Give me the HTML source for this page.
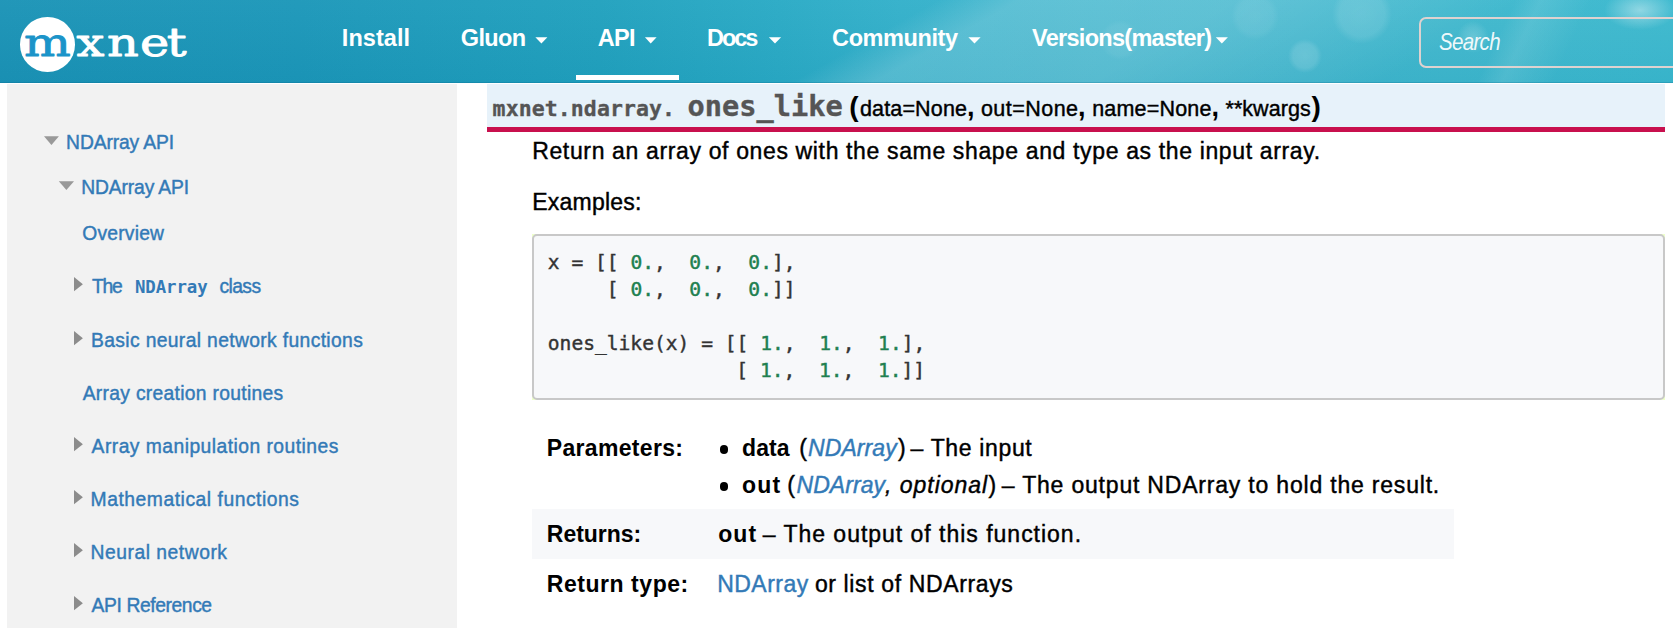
<!DOCTYPE html>
<html lang="en">
<head>
<meta charset="utf-8">
<title>NDArray API - mxnet documentation</title>
<style>
html,body{margin:0;padding:0;background:#fff;}
body{width:1673px;height:628px;overflow:hidden;position:relative;font-family:'Liberation Sans',Arial,sans-serif;}
a{text-decoration:none;}
p,em,code{margin:0;padding:0;}
.layer{position:absolute;left:0;top:0;width:1673px;height:628px;}
header.navbar{position:absolute;left:0;top:0;width:1673px;height:83px;overflow:hidden;
 background:
  radial-gradient(ellipse 36px 20px at 1640px 10px, rgba(255,255,255,.42), rgba(255,255,255,0) 100%),
  radial-gradient(circle 16px at 1473px 37px, rgba(255,255,255,.20) 0, rgba(255,255,255,.10) 60%, rgba(255,255,255,0) 100%),
  radial-gradient(circle 30px at 1362px 14px, rgba(255,255,255,.13) 0, rgba(255,255,255,.10) 75%, rgba(255,255,255,0) 100%),
  radial-gradient(circle 17px at 1305px 56px, rgba(255,255,255,.16) 0, rgba(255,255,255,.12) 70%, rgba(255,255,255,0) 100%),
  radial-gradient(circle 24px at 1255px 16px, rgba(255,255,255,.08) 0, rgba(255,255,255,.06) 75%, rgba(255,255,255,0) 100%),
  radial-gradient(circle 20px at 1120px 40px, rgba(255,255,255,.07) 0, rgba(255,255,255,.05) 75%, rgba(255,255,255,0) 100%),
  linear-gradient(115deg, rgba(255,255,255,0) 88.5%, rgba(255,255,255,.10) 90%, rgba(255,255,255,0) 93%),
  linear-gradient(150.7deg, rgba(255,255,255,0) 51.5%, rgba(255,255,255,.17) 56%, rgba(255,255,255,.15) 68%, rgba(255,255,255,0) 84%),
  linear-gradient(180deg, rgba(255,255,255,.035), rgba(0,40,80,.035)),
  linear-gradient(90deg,#1a93b6 0px,#1b97b9 300px,#20a1be 600px,#29aac5 780px,#32b0ca 900px,#3cb4cc 1100px,#3fb6cd 1300px,#3db7cd 1450px,#39b8ce 1673px);}
header.navbar:after{content:"";position:absolute;left:0;right:0;bottom:0;height:1px;background:rgba(0,90,130,.22);}
.logo-circle{position:absolute;left:20.2px;top:17.4px;width:54.6px;height:54.6px;border-radius:50%;background:#fff;}
.underline{position:absolute;left:576.4px;top:75px;width:102.6px;height:5px;background:#fff;}
.searchbox{position:absolute;left:1419.3px;top:17.2px;width:300px;height:50.6px;box-sizing:border-box;border:2px solid #ded2d0;border-radius:7px;background:rgba(255,255,255,.02);}
aside.sidebar{position:absolute;left:7px;top:84px;width:450px;height:544px;background:#f2f2f2;}
.sigbg{position:absolute;left:487px;top:84px;width:1178px;height:42.8px;background:#e7f2fa;border-bottom:5.2px solid #c8104e;}
.highlight{position:absolute;left:532px;top:234px;width:1133px;height:166px;background:#eeffcc;}
.codebox{position:absolute;left:0;top:0;width:1133px;height:166px;box-sizing:border-box;border:2px solid #c8c8c8;border-radius:5px;background:#f7f8fa;}
.rowbg{position:absolute;left:532px;top:509px;width:921.5px;height:50px;background:#f7f8fa;}
.bullet{position:absolute;width:8.6px;height:8.6px;border-radius:50%;background:#000;left:719.6px;}
</style>
</head>
<body>
<header class="navbar">
 <div class="logo-circle"></div>
 <svg class="layer" width="1673" height="83" viewBox="0 0 1673 83" style="height:83px">
  <text transform="scale(1.22,0.98)" x="19.76 62.72 87.77 114.68 136.75" y="56.73" font-family="'DejaVu Serif','Liberation Serif',serif" font-size="40.5" stroke-width="0.9" stroke-linejoin="round"><tspan fill="#1b94c9" stroke="#1b94c9">m</tspan><tspan fill="#fff" stroke="#fff">xnet</tspan></text>
  <polygon points="535.4,37.3 547.4,37.3 541.4,43.5" fill="#fff"/><polygon points="644.9,37.3 656.6,37.3 650.75,43.5" fill="#fff"/><polygon points="768.9,37.3 781.1,37.3 775.0,43.5" fill="#fff"/><polygon points="968.4,37.3 980.6,37.3 974.5,43.5" fill="#fff"/><polygon points="1215.8000000000002,37.3 1227.8999999999999,37.3 1221.85,43.5" fill="#fff"/>
 </svg>
 <nav>
<span class="nav" style="position:absolute;left:341.80px;top:27.00px;white-space:pre;line-height:1;font-family:'Liberation Sans', Arial, sans-serif;font-size:23.5px;font-weight:bold;font-style:normal;color:#fff;letter-spacing:0.067px;">Install</span>
<span class="nav" style="position:absolute;left:460.80px;top:27.00px;white-space:pre;line-height:1;font-family:'Liberation Sans', Arial, sans-serif;font-size:23.5px;font-weight:bold;font-style:normal;color:#fff;letter-spacing:-0.625px;">Gluon</span>
<span class="nav" style="position:absolute;left:597.80px;top:27.00px;white-space:pre;line-height:1;font-family:'Liberation Sans', Arial, sans-serif;font-size:23.5px;font-weight:bold;font-style:normal;color:#fff;letter-spacing:-0.700px;">API</span>
<span class="nav" style="position:absolute;left:707.00px;top:27.00px;white-space:pre;line-height:1;font-family:'Liberation Sans', Arial, sans-serif;font-size:23.5px;font-weight:bold;font-style:normal;color:#fff;letter-spacing:-2.067px;">Docs</span>
<span class="nav" style="position:absolute;left:832.10px;top:27.00px;white-space:pre;line-height:1;font-family:'Liberation Sans', Arial, sans-serif;font-size:23.5px;font-weight:bold;font-style:normal;color:#fff;letter-spacing:-0.412px;">Community</span>
<span class="nav" style="position:absolute;left:1032.00px;top:27.00px;white-space:pre;line-height:1;font-family:'Liberation Sans', Arial, sans-serif;font-size:23.5px;font-weight:bold;font-style:normal;color:#fff;letter-spacing:-0.707px;">Versions(master)</span>
 </nav>
 <div class="underline"></div>
 <div class="searchbox"></div>
<span class="search" style="position:absolute;left:1439.10px;top:31.00px;white-space:pre;line-height:1;font-family:'Liberation Sans', Arial, sans-serif;font-size:23.6px;font-weight:normal;font-style:italic;color:rgba(255,255,255,0.93);letter-spacing:-0.800px;transform:scaleX(.87);transform-origin:0 0;">Search</span>
</header>
<aside class="sidebar"></aside>
<div class="layer sidebar-items">
 <svg class="layer" width="1673" height="628" viewBox="0 0 1673 628"><polygon points="44.0,136.2 58.9,136.2 51.45,144.9" fill="#999"/><polygon points="58.8,181.2 74,181.2 66.4,189.9" fill="#999"/><polygon points="74,277.1 82.9,284.15 74,291.2" fill="#8c8c8c"/><polygon points="74,331.1 82.9,338.15 74,345.2" fill="#8c8c8c"/><polygon points="74,437.1 82.9,444.15 74,451.2" fill="#8c8c8c"/><polygon points="74,490.1 82.9,497.15 74,504.2" fill="#8c8c8c"/><polygon points="74,543.1 82.9,550.1500000000001 74,557.2" fill="#8c8c8c"/><polygon points="74,596.1 82.9,603.1500000000001 74,610.2" fill="#8c8c8c"/></svg>
<a class="side" style="position:absolute;left:66.10px;top:133.00px;white-space:pre;line-height:1;font-family:'Liberation Sans', Arial, sans-serif;font-size:19.3px;font-weight:normal;font-style:normal;color:#337ab7;letter-spacing:-0.130px;-webkit-text-stroke:0.42px;">NDArray API</a>
<a class="side" style="position:absolute;left:81.20px;top:178.00px;white-space:pre;line-height:1;font-family:'Liberation Sans', Arial, sans-serif;font-size:19.3px;font-weight:normal;font-style:normal;color:#337ab7;letter-spacing:-0.130px;-webkit-text-stroke:0.42px;">NDArray API</a>
<a class="side" style="position:absolute;left:82.20px;top:224.00px;white-space:pre;line-height:1;font-family:'Liberation Sans', Arial, sans-serif;font-size:19.3px;font-weight:normal;font-style:normal;color:#337ab7;letter-spacing:0.214px;-webkit-text-stroke:0.42px;">Overview</a>
<a class="side" style="position:absolute;left:92.00px;top:277.00px;white-space:pre;line-height:1;font-family:'Liberation Sans', Arial, sans-serif;font-size:19.3px;font-weight:normal;font-style:normal;color:#337ab7;letter-spacing:-1.200px;-webkit-text-stroke:0.42px;">The</a>
<code class="side" style="position:absolute;left:134.90px;top:279.00px;white-space:pre;line-height:1;font-family:'DejaVu Sans Mono', 'Liberation Mono', monospace;font-size:17.4px;font-weight:bold;font-style:normal;color:#337ab7;letter-spacing:-0.083px;">NDArray</code>
<a class="side" style="position:absolute;left:219.50px;top:277.00px;white-space:pre;line-height:1;font-family:'Liberation Sans', Arial, sans-serif;font-size:19.3px;font-weight:normal;font-style:normal;color:#337ab7;letter-spacing:-0.600px;-webkit-text-stroke:0.42px;">class</a>
<a class="side" style="position:absolute;left:91.00px;top:331.00px;white-space:pre;line-height:1;font-family:'Liberation Sans', Arial, sans-serif;font-size:19.3px;font-weight:normal;font-style:normal;color:#337ab7;letter-spacing:0.355px;-webkit-text-stroke:0.42px;">Basic neural network functions</a>
<a class="side" style="position:absolute;left:82.70px;top:384.00px;white-space:pre;line-height:1;font-family:'Liberation Sans', Arial, sans-serif;font-size:19.3px;font-weight:normal;font-style:normal;color:#337ab7;letter-spacing:0.295px;-webkit-text-stroke:0.42px;">Array creation routines</a>
<a class="side" style="position:absolute;left:91.60px;top:437.00px;white-space:pre;line-height:1;font-family:'Liberation Sans', Arial, sans-serif;font-size:19.3px;font-weight:normal;font-style:normal;color:#337ab7;letter-spacing:0.462px;-webkit-text-stroke:0.42px;">Array manipulation routines</a>
<a class="side" style="position:absolute;left:90.60px;top:490.00px;white-space:pre;line-height:1;font-family:'Liberation Sans', Arial, sans-serif;font-size:19.3px;font-weight:normal;font-style:normal;color:#337ab7;letter-spacing:0.533px;-webkit-text-stroke:0.42px;">Mathematical functions</a>
<a class="side" style="position:absolute;left:90.60px;top:543.00px;white-space:pre;line-height:1;font-family:'Liberation Sans', Arial, sans-serif;font-size:19.3px;font-weight:normal;font-style:normal;color:#337ab7;letter-spacing:0.515px;-webkit-text-stroke:0.42px;">Neural network</a>
<a class="side" style="position:absolute;left:91.60px;top:596.00px;white-space:pre;line-height:1;font-family:'Liberation Sans', Arial, sans-serif;font-size:19.3px;font-weight:normal;font-style:normal;color:#337ab7;letter-spacing:-0.408px;-webkit-text-stroke:0.42px;">API Reference</a>
</div>
<main class="layer">
 <div class="sigbg"></div>
 <dl><dt>
<code class="sig" style="position:absolute;left:492.60px;top:98.00px;white-space:pre;line-height:1;font-family:'DejaVu Sans Mono', 'Liberation Mono', monospace;font-size:21.5px;font-weight:bold;font-style:normal;color:#555;letter-spacing:0.092px;-webkit-text-stroke:0.35px;">mxnet.ndarray.</code>
<code class="sig" style="position:absolute;left:687.60px;top:92.00px;white-space:pre;line-height:1;font-family:'DejaVu Sans Mono', 'Liberation Mono', monospace;font-size:28.6px;font-weight:bold;font-style:normal;color:#555;letter-spacing:0.037px;-webkit-text-stroke:0.4px;">ones_like</code>
<span class="sig" style="position:absolute;left:849.20px;top:93.00px;white-space:pre;line-height:1;font-family:'Liberation Sans', Arial, sans-serif;font-size:28px;font-weight:bold;font-style:normal;color:#000;letter-spacing:0.000px;">(</span>
<em class="sig" style="position:absolute;left:859.90px;top:99.00px;white-space:pre;line-height:1;font-family:'Liberation Sans', Arial, sans-serif;font-size:21.5px;font-weight:normal;font-style:normal;color:#000;letter-spacing:0.163px;-webkit-text-stroke:0.42px;">data=None</em>
<span class="sig" style="position:absolute;left:967.10px;top:94.00px;white-space:pre;line-height:1;font-family:'Liberation Sans', Arial, sans-serif;font-size:27px;font-weight:bold;font-style:normal;color:#000;letter-spacing:0.000px;">,</span>
<em class="sig" style="position:absolute;left:980.90px;top:99.00px;white-space:pre;line-height:1;font-family:'Liberation Sans', Arial, sans-serif;font-size:21.5px;font-weight:normal;font-style:normal;color:#000;letter-spacing:0.471px;-webkit-text-stroke:0.42px;">out=None</em>
<span class="sig" style="position:absolute;left:1078.10px;top:94.00px;white-space:pre;line-height:1;font-family:'Liberation Sans', Arial, sans-serif;font-size:27px;font-weight:bold;font-style:normal;color:#000;letter-spacing:0.000px;">,</span>
<em class="sig" style="position:absolute;left:1092.20px;top:99.00px;white-space:pre;line-height:1;font-family:'Liberation Sans', Arial, sans-serif;font-size:21.5px;font-weight:normal;font-style:normal;color:#000;letter-spacing:0.187px;-webkit-text-stroke:0.42px;">name=None</em>
<span class="sig" style="position:absolute;left:1211.60px;top:94.00px;white-space:pre;line-height:1;font-family:'Liberation Sans', Arial, sans-serif;font-size:27px;font-weight:bold;font-style:normal;color:#000;letter-spacing:0.000px;">,</span>
<em class="sig" style="position:absolute;left:1225.50px;top:99.00px;white-space:pre;line-height:1;font-family:'Liberation Sans', Arial, sans-serif;font-size:21.5px;font-weight:normal;font-style:normal;color:#000;letter-spacing:0.043px;-webkit-text-stroke:0.42px;">**kwargs</em>
<span class="sig" style="position:absolute;left:1311.50px;top:93.00px;white-space:pre;line-height:1;font-family:'Liberation Sans', Arial, sans-serif;font-size:28px;font-weight:bold;font-style:normal;color:#000;letter-spacing:0.000px;">)</span>
 </dt></dl>
<p class="p" style="position:absolute;left:532.20px;top:140.00px;white-space:pre;line-height:1;font-family:'Liberation Sans', Arial, sans-serif;font-size:23px;font-weight:normal;font-style:normal;color:#000;letter-spacing:0.641px;-webkit-text-stroke:0.42px;">Return an array of ones with the same shape and type as the input array.</p>
<p class="p" style="position:absolute;left:532.20px;top:191.00px;white-space:pre;line-height:1;font-family:'Liberation Sans', Arial, sans-serif;font-size:23px;font-weight:normal;font-style:normal;color:#000;letter-spacing:0.238px;-webkit-text-stroke:0.42px;">Examples:</p>
 <div class="highlight"><div class="codebox"></div></div>
 <pre style="margin:0">
<span class="code" style="position:absolute;left:547.80px;top:253.00px;white-space:pre;line-height:1;font-family:'DejaVu Sans Mono', 'Liberation Mono', monospace;font-size:19.6px;font-weight:normal;font-style:normal;color:#333;letter-spacing:0.000px;-webkit-text-stroke:0.42px;">x = [[ <span style="color:#208050">0.</span>,  <span style="color:#208050">0.</span>,  <span style="color:#208050">0.</span>],</span>
<span class="code" style="position:absolute;left:547.80px;top:280.00px;white-space:pre;line-height:1;font-family:'DejaVu Sans Mono', 'Liberation Mono', monospace;font-size:19.6px;font-weight:normal;font-style:normal;color:#333;letter-spacing:0.000px;-webkit-text-stroke:0.42px;">     [ <span style="color:#208050">0.</span>,  <span style="color:#208050">0.</span>,  <span style="color:#208050">0.</span>]]</span>
<span class="code" style="position:absolute;left:547.80px;top:334.00px;white-space:pre;line-height:1;font-family:'DejaVu Sans Mono', 'Liberation Mono', monospace;font-size:19.6px;font-weight:normal;font-style:normal;color:#333;letter-spacing:0.000px;-webkit-text-stroke:0.42px;">ones_like(x) = [[ <span style="color:#208050">1.</span>,  <span style="color:#208050">1.</span>,  <span style="color:#208050">1.</span>],</span>
<span class="code" style="position:absolute;left:547.60px;top:361.00px;white-space:pre;line-height:1;font-family:'DejaVu Sans Mono', 'Liberation Mono', monospace;font-size:19.6px;font-weight:normal;font-style:normal;color:#333;letter-spacing:0.000px;-webkit-text-stroke:0.42px;">                [ <span style="color:#208050">1.</span>,  <span style="color:#208050">1.</span>,  <span style="color:#208050">1.</span>]]</span>
 </pre>
 <div class="rowbg"></div>
 <div class="bullet" style="top:445.4px"></div>
 <div class="bullet" style="top:482px"></div>
<span class="th" style="position:absolute;left:546.80px;top:437.00px;white-space:pre;line-height:1;font-family:'Liberation Sans', Arial, sans-serif;font-size:23px;font-weight:bold;font-style:normal;color:#000;letter-spacing:0.320px;">Parameters:</span>
<span class="th" style="position:absolute;left:546.80px;top:523.00px;white-space:pre;line-height:1;font-family:'Liberation Sans', Arial, sans-serif;font-size:23px;font-weight:bold;font-style:normal;color:#000;letter-spacing:-0.029px;">Returns:</span>
<span class="th" style="position:absolute;left:546.80px;top:573.00px;white-space:pre;line-height:1;font-family:'Liberation Sans', Arial, sans-serif;font-size:23px;font-weight:bold;font-style:normal;color:#000;letter-spacing:0.545px;">Return type:</span>
<span class="td" style="position:absolute;left:742.10px;top:437.00px;white-space:pre;line-height:1;font-family:'Liberation Sans', Arial, sans-serif;font-size:23px;font-weight:bold;font-style:normal;color:#000;letter-spacing:0.067px;">data</span>
<span class="td" style="position:absolute;left:799.30px;top:437.00px;white-space:pre;line-height:1;font-family:'Liberation Sans', Arial, sans-serif;font-size:23px;font-weight:normal;font-style:normal;color:#000;letter-spacing:0.000px;-webkit-text-stroke:0.42px;">(</span>
<a class="td" style="position:absolute;left:808.10px;top:437.00px;white-space:pre;line-height:1;font-family:'Liberation Sans', Arial, sans-serif;font-size:23px;font-weight:normal;font-style:italic;color:#337ab7;letter-spacing:0.067px;-webkit-text-stroke:0.42px;">NDArray</a>
<span class="td" style="position:absolute;left:898.00px;top:437.00px;white-space:pre;line-height:1;font-family:'Liberation Sans', Arial, sans-serif;font-size:23px;font-weight:normal;font-style:normal;color:#000;letter-spacing:0.000px;-webkit-text-stroke:0.42px;">)</span>
<span class="td" style="position:absolute;left:910.60px;top:437.00px;white-space:pre;line-height:1;font-family:'Liberation Sans', Arial, sans-serif;font-size:23px;font-weight:normal;font-style:normal;color:#000;letter-spacing:0.650px;-webkit-text-stroke:0.42px;">– The input</span>
<span class="td" style="position:absolute;left:742.10px;top:474.00px;white-space:pre;line-height:1;font-family:'Liberation Sans', Arial, sans-serif;font-size:23px;font-weight:bold;font-style:normal;color:#000;letter-spacing:1.150px;">out</span>
<span class="td" style="position:absolute;left:787.20px;top:474.00px;white-space:pre;line-height:1;font-family:'Liberation Sans', Arial, sans-serif;font-size:23px;font-weight:normal;font-style:normal;color:#000;letter-spacing:0.000px;-webkit-text-stroke:0.42px;">(</span>
<a class="td" style="position:absolute;left:796.50px;top:474.00px;white-space:pre;line-height:1;font-family:'Liberation Sans', Arial, sans-serif;font-size:23px;font-weight:normal;font-style:italic;color:#337ab7;letter-spacing:0.050px;-webkit-text-stroke:0.42px;">NDArray</a>
<span class="td" style="position:absolute;left:885.00px;top:474.00px;white-space:pre;line-height:1;font-family:'Liberation Sans', Arial, sans-serif;font-size:23px;font-weight:normal;font-style:italic;color:#000;letter-spacing:0.978px;-webkit-text-stroke:0.42px;">, optional</span>
<span class="td" style="position:absolute;left:988.40px;top:474.00px;white-space:pre;line-height:1;font-family:'Liberation Sans', Arial, sans-serif;font-size:23px;font-weight:normal;font-style:normal;color:#000;letter-spacing:0.000px;-webkit-text-stroke:0.42px;">)</span>
<span class="td" style="position:absolute;left:1001.80px;top:474.00px;white-space:pre;line-height:1;font-family:'Liberation Sans', Arial, sans-serif;font-size:23px;font-weight:normal;font-style:normal;color:#000;letter-spacing:0.803px;-webkit-text-stroke:0.42px;">– The output NDArray to hold the result.</span>
<span class="td" style="position:absolute;left:718.20px;top:523.00px;white-space:pre;line-height:1;font-family:'Liberation Sans', Arial, sans-serif;font-size:23px;font-weight:bold;font-style:normal;color:#000;letter-spacing:1.050px;">out</span>
<span class="td" style="position:absolute;left:762.70px;top:523.00px;white-space:pre;line-height:1;font-family:'Liberation Sans', Arial, sans-serif;font-size:23px;font-weight:normal;font-style:normal;color:#000;letter-spacing:0.983px;-webkit-text-stroke:0.42px;">– The output of this function.</span>
<a class="td" style="position:absolute;left:717.20px;top:573.00px;white-space:pre;line-height:1;font-family:'Liberation Sans', Arial, sans-serif;font-size:23px;font-weight:normal;font-style:normal;color:#337ab7;letter-spacing:0.483px;-webkit-text-stroke:0.42px;">NDArray</a>
<span class="td" style="position:absolute;left:814.90px;top:573.00px;white-space:pre;line-height:1;font-family:'Liberation Sans', Arial, sans-serif;font-size:23px;font-weight:normal;font-style:normal;color:#000;letter-spacing:0.628px;-webkit-text-stroke:0.42px;">or list of NDArrays</span>
</main>
</body>
</html>
